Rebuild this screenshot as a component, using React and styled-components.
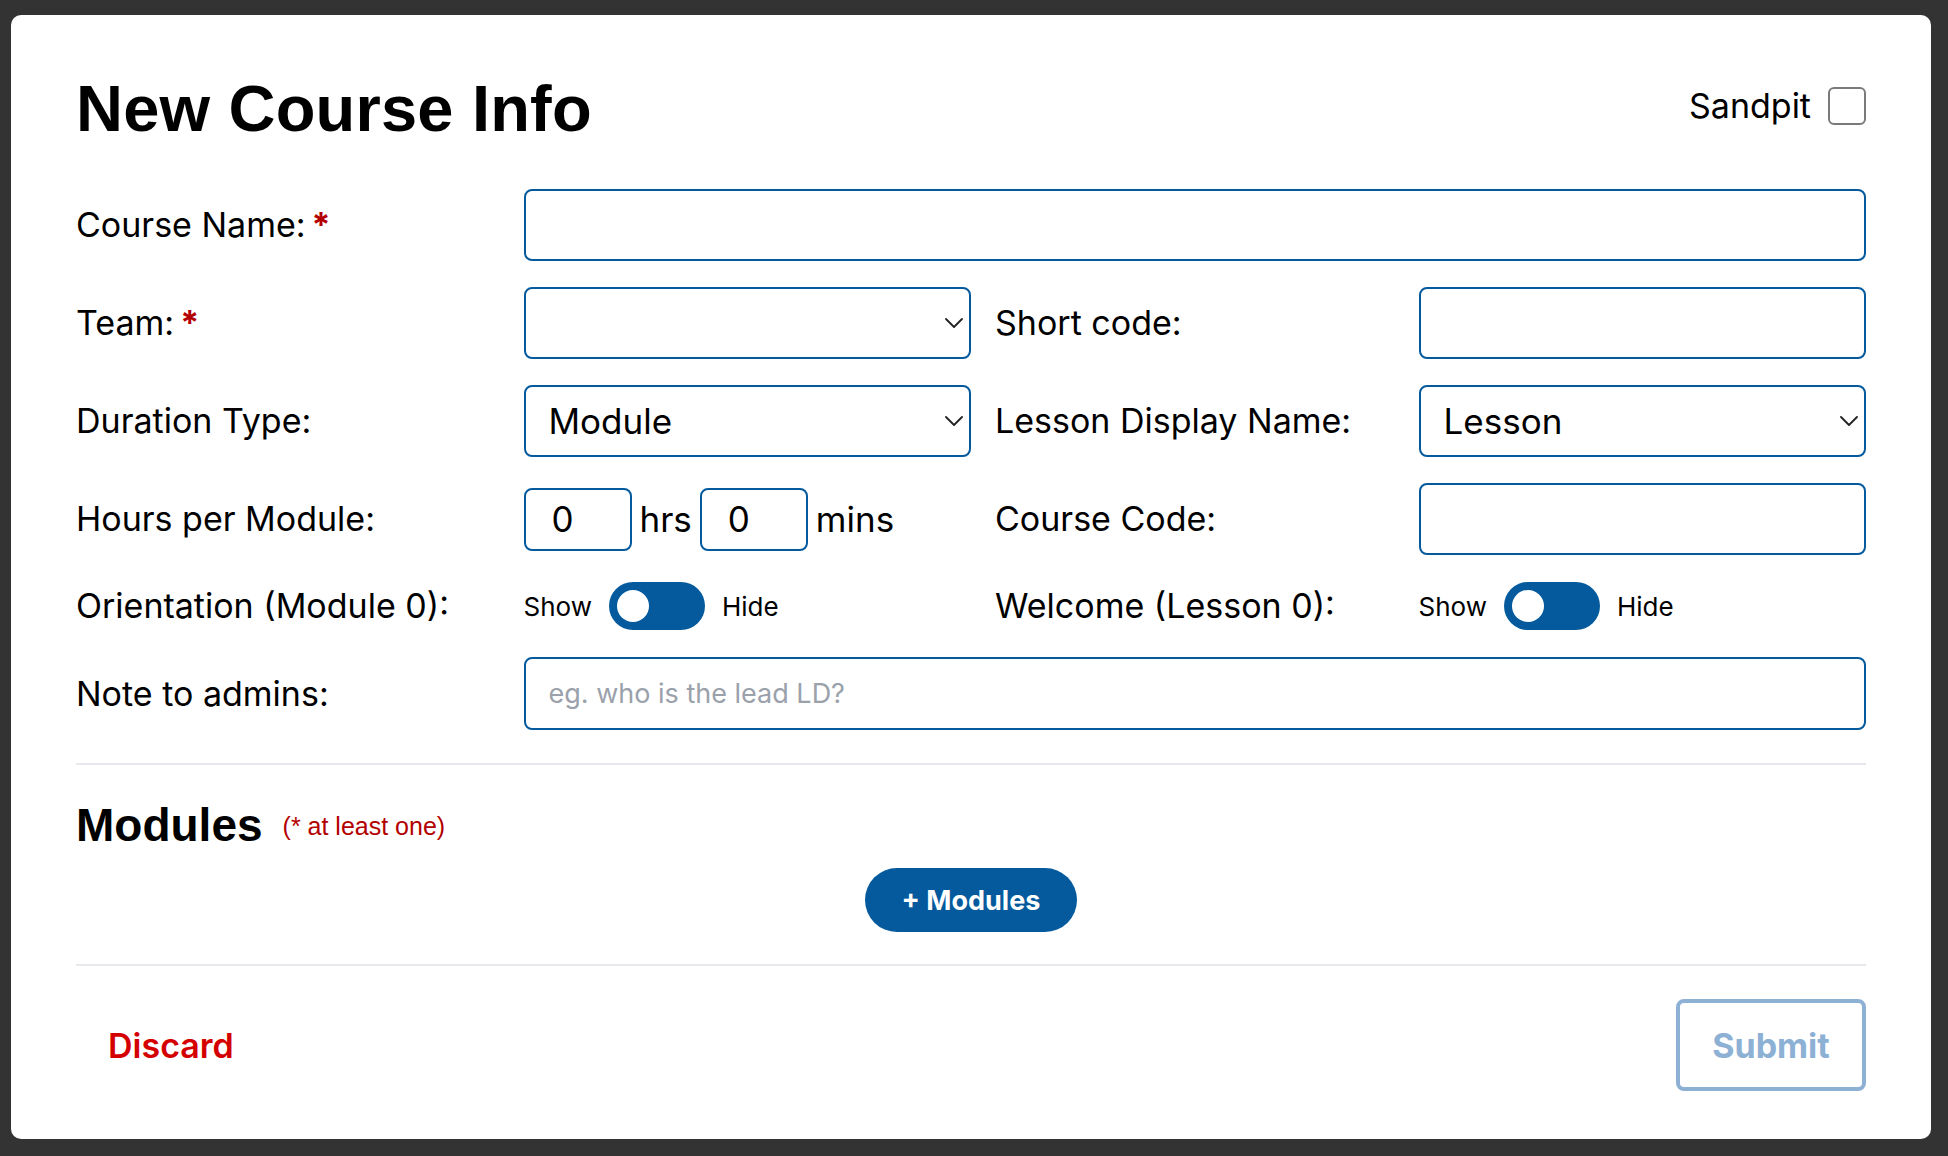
import React from "react";
import styled, { createGlobalStyle } from "styled-components";

const BLUE = "#045a9c";
const LABEL_FONT = `"Liberation Sans", Arial, Helvetica, sans-serif`;
const UI_FONT = `Inter, "Noto Sans", Roboto, sans-serif`;

const GlobalStyle = createGlobalStyle`
  * { box-sizing: border-box; }
  html, body { margin: 0; padding: 0; background: #333333; }
  body { font-family: ${UI_FONT}; color: #000; }
`;

const Page = styled.div`
  min-height: 1156px;
  padding: 15px 17px 16px 11px;
  background: #333333;
`;

const Card = styled.div`
  background: #ffffff;
  border-radius: 10px;
  padding: 61px 65px 48px 65px;
  display: flex;
  flex-direction: column;
`;

const Header = styled.div`
  height: 65px;
  display: flex;
  align-items: center;
  justify-content: space-between;
  margin-bottom: 48px;
`;

const Title = styled.h1`
  margin: 0;
  font-family: ${LABEL_FONT};
  font-weight: 700;
  font-size: 65px;
  line-height: 65px;
  letter-spacing: 0.2px;
`;

const SandpitLabel = styled.label`
  display: flex;
  align-items: center;
  gap: 17px;
  font-family: ${UI_FONT};
  font-size: 34px;
  margin-top: -6px;
`;

const Checkbox = styled.input.attrs({ type: "checkbox" })`
  appearance: none;
  margin: 0;
  width: 38px;
  height: 38px;
  border: 2px solid #7a7a7a;
  border-radius: 6px;
  background: #fff;
`;

const Grid = styled.div`
  display: grid;
  grid-template-columns: repeat(4, 1fr);
  grid-template-rows: 72px 72px 72px 72px 50px 73px;
  row-gap: 26px;
  align-items: center;
`;

const Label = styled.label`
  font-family: ${UI_FONT};
  font-size: 34px;
  line-height: 40px;
  padding-left: ${(p) => (p.$right ? "24px" : "0")};
  white-space: nowrap;
`;

const Req = styled.span`
  color: #b30000;
  font-weight: 700;
  margin-left: 6px;
`;

const TextInput = styled.input`
  grid-column: ${(p) => p.$span || "auto"};
  width: 100%;
  height: ${(p) => p.$h || 72}px;
  margin: 0;
  border: 2px solid ${BLUE};
  border-radius: 8px;
  padding: 0 23px;
  font-family: ${UI_FONT};
  font-size: ${(p) => p.$fs || 35}px;
  color: #000;
  background: #fff;
  outline: none;
  &::placeholder { color: #9aa1ab; }
`;

const SelectWrap = styled.div`
  position: relative;
  height: 72px;
`;

const Select = styled.select`
  appearance: none;
  width: 100%;
  height: 72px;
  margin: 0;
  border: 2px solid ${BLUE};
  border-radius: 8px;
  padding: 0 40px 0 23px;
  font-family: ${UI_FONT};
  font-size: 35px;
  color: #000;
  background: #fff;
  outline: none;
`;

const Chevron = styled.svg`
  position: absolute;
  right: 8px;
  top: 50%;
  transform: translateY(-50%);
  pointer-events: none;
`;

const Inline = styled.div`
  display: flex;
  align-items: center;
  gap: ${(p) => p.$gap || 8}px;
`;

const SmallInput = styled.input`
  width: 108px;
  height: 63px;
  margin: 0;
  border: 2px solid ${BLUE};
  border-radius: 8px;
  padding: 0 0 0 26px;
  font-family: ${UI_FONT};
  font-size: 35px;
  color: #000;
  outline: none;
`;

const Unit = styled.span`
  font-family: ${UI_FONT};
  font-size: 35px;
`;

const ToggleText = styled.span`
  font-family: ${UI_FONT};
  font-size: 26px;
`;

const Toggle = styled.div`
  position: relative;
  width: 96px;
  height: 48px;
  border-radius: 24px;
  background: ${BLUE};
  &::after {
    content: "";
    position: absolute;
    left: 8px;
    top: 8px;
    width: 32px;
    height: 32px;
    border-radius: 50%;
    background: #fff;
  }
`;

const Divider = styled.hr`
  margin: ${(p) => p.$mt}px 0 0 0;
  border: none;
  height: 2px;
  background: #e7e7ec;
`;

const ModulesHead = styled.div`
  display: flex;
  align-items: baseline;
  gap: 20px;
  margin-top: 37px;
`;

const H2 = styled.h2`
  margin: 0;
  font-family: ${LABEL_FONT};
  font-weight: 700;
  font-size: 46px;
  line-height: 46px;
`;

const Note = styled.span`
  font-family: ${LABEL_FONT};
  font-size: 25px;
  color: #b30000;
  position: relative;
  top: -6px;
`;

const Center = styled.div`
  display: flex;
  justify-content: center;
  margin-top: 20px;
`;

const PillButton = styled.button`
  width: 212px;
  height: 64px;
  border: none;
  border-radius: 32px;
  background: ${BLUE};
  color: #fff;
  font-family: ${UI_FONT};
  font-weight: 700;
  font-size: 27px;
  padding: 0;
`;

const Footer = styled.div`
  display: flex;
  align-items: center;
  justify-content: space-between;
  margin-top: 33px;
`;

const DiscardButton = styled.button`
  border: none;
  background: none;
  padding: 0 0 0 32px;
  color: #d40000;
  font-family: ${UI_FONT};
  font-weight: 600;
  font-size: 34px;
`;

const SubmitButton = styled.button`
  width: 190px;
  height: 92px;
  border: 4px solid #8db0d5;
  border-radius: 8px;
  background: #fff;
  color: #8db0d5;
  font-family: ${UI_FONT};
  font-weight: 700;
  font-size: 34px;
  padding: 0;
`;

const ChevronIcon = () => (
  <Chevron width="18" height="10" viewBox="0 0 18 10">
    <path d="M1 1 L9 9 L17 1" fill="none" stroke="#222" strokeWidth="1.8" strokeLinecap="round" strokeLinejoin="round" />
  </Chevron>
);

const SelectBox = ({ value, options }) => (
  <SelectWrap>
    <Select defaultValue={value}>
      {options.map((o) => (
        <option key={o} value={o}>{o}</option>
      ))}
    </Select>
    <ChevronIcon />
  </SelectWrap>
);

const ShowHide = () => (
  <Inline $gap={17}>
    <ToggleText>Show</ToggleText>
    <Toggle />
    <ToggleText>Hide</ToggleText>
  </Inline>
);

export default function App() {
  return (
    <>
      <GlobalStyle />
      <Page>
        <Card>
          <Header>
            <Title>New Course Info</Title>
            <SandpitLabel>
              Sandpit
              <Checkbox />
            </SandpitLabel>
          </Header>

          <Grid>
            <Label>Course Name:<Req>*</Req></Label>
            <TextInput $span="2 / 5" />

            <Label>Team:<Req>*</Req></Label>
            <SelectBox value="" options={[""]} />
            <Label $right>Short code:</Label>
            <TextInput />

            <Label>Duration Type:</Label>
            <SelectBox value="Module" options={["Module", "Week", "Day"]} />
            <Label $right>Lesson Display Name:</Label>
            <SelectBox value="Lesson" options={["Lesson", "Topic", "Unit"]} />

            <Label>Hours per Module:</Label>
            <Inline $gap={8}>
              <SmallInput defaultValue="0" />
              <Unit>hrs</Unit>
              <SmallInput defaultValue="0" />
              <Unit>mins</Unit>
            </Inline>
            <Label $right>Course Code:</Label>
            <TextInput />

            <Label>Orientation (Module 0):</Label>
            <ShowHide />
            <Label $right>Welcome (Lesson 0):</Label>
            <ShowHide />

            <Label>Note to admins:</Label>
            <TextInput $span="2 / 5" $fs={27} $h={73} placeholder="eg. who is the lead LD?" />
          </Grid>

          <Divider $mt={33} />

          <ModulesHead>
            <H2>Modules</H2>
            <Note>(* at least one)</Note>
          </ModulesHead>
          <Center>
            <PillButton>+ Modules</PillButton>
          </Center>

          <Divider $mt={32} />

          <Footer>
            <DiscardButton>Discard</DiscardButton>
            <SubmitButton>Submit</SubmitButton>
          </Footer>
        </Card>
      </Page>
    </>
  );
}
